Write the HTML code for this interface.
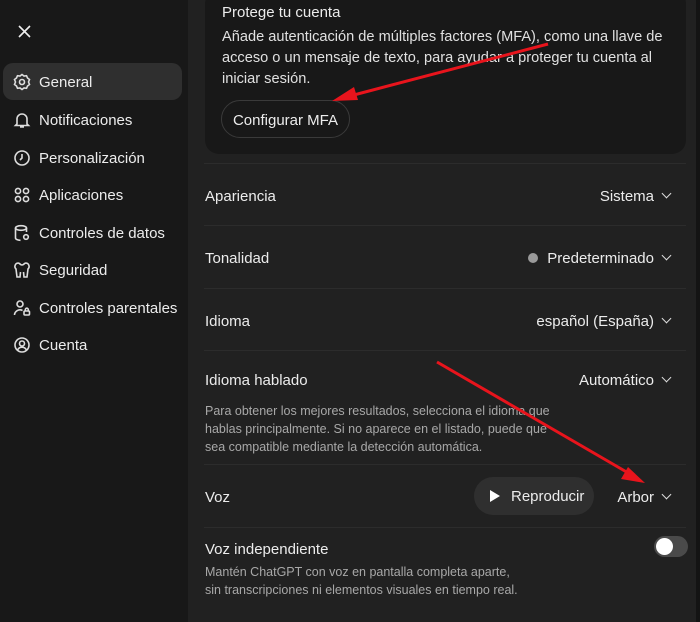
<!DOCTYPE html>
<html><head><meta charset="utf-8"><style>
*{margin:0;padding:0;box-sizing:border-box}
body{width:700px;height:622px;background:#212121;font-family:"Liberation Sans",sans-serif;color:#ececec;position:relative;overflow:hidden}
.sb{position:absolute;left:0;top:0;width:188px;height:622px;background:#181818}
.it{position:absolute;left:3px;width:179px;height:37px;border-radius:10px;font-size:15px;line-height:39px;padding-left:36px}
.it svg{position:absolute;left:10px;top:10px}
.sel{background:#2f2f2f}
.card{position:absolute;left:205px;top:-10px;width:481px;height:164px;background:#181818;border-radius:14px}
.t{position:absolute;font-size:15px;white-space:nowrap}
.d{position:absolute;font-size:12.5px;color:#a8a8a8;line-height:18px}
.hr{position:absolute;left:204px;width:482px;height:1px;background:#2c2c2c}
.ch{display:inline-block;width:7px;height:7px;border-right:1.6px solid #ddd;border-bottom:1.6px solid #ddd;transform:rotate(45deg);margin-left:9px;position:relative;top:-4px}
.edge{position:absolute;right:0;top:0;width:4px;height:622px;background:#141414}
</style></head><body>
<div class="sb">
<svg style="position:absolute;left:18px;top:25px" width="13" height="13"><path d="M1 1l11 11M12 1L1 12" stroke="#eee" stroke-width="1.6"/></svg>
<div class="it sel" style="top:63px"><svg width="18" height="18" viewBox="0 0 18 18" fill="none" stroke="#ddd" stroke-width="1.6"><circle cx="9" cy="9" r="2.5"/><path d="M9 1.5l2 1.5 2.5-.3 1 2.3 2 1.5-1 2.5 1 2.5-2 1.5-1 2.3-2.5-.3-2 1.5-2-1.5-2.5.3-1-2.3-2-1.5 1-2.5-1-2.5 2-1.5 1-2.3 2.5.3z"/></svg>General</div>
<div class="it" style="top:101px"><svg width="18" height="18" viewBox="0 0 18 18" fill="none" stroke="#ddd" stroke-width="1.6"><path d="M4 13V8a5 5 0 0110 0v5l1.5 1.5h-13zM7 16h4"/></svg>Notificaciones</div>
<div class="it" style="top:139px"><svg width="18" height="18" viewBox="0 0 18 18" fill="none" stroke="#ddd" stroke-width="1.6"><circle cx="9" cy="9" r="7"/><path d="M9 5v4l-2 2"/></svg>Personalización</div>
<div class="it" style="top:176px"><svg width="18" height="18" viewBox="0 0 18 18" fill="none" stroke="#ddd" stroke-width="1.6"><circle cx="5" cy="5" r="2.6"/><circle cx="13" cy="5" r="2.6"/><circle cx="5" cy="13" r="2.6"/><circle cx="13" cy="13" r="2.6"/></svg>Aplicaciones</div>
<div class="it" style="top:214px"><svg width="18" height="18" viewBox="0 0 18 18" fill="none" stroke="#ddd" stroke-width="1.6"><ellipse cx="8" cy="4" rx="5.5" ry="2.3"/><path d="M2.5 4v10c0 1.3 2.5 2.3 5 2.3M13.5 4v4"/><circle cx="13" cy="13" r="2.3"/></svg>Controles de datos</div>
<div class="it" style="top:251px"><svg width="18" height="18" viewBox="0 0 18 18" fill="none" stroke="#ddd" stroke-width="1.6"><path d="M5 2a3.5 3.5 0 00-2 6l1 8h3l.5-5M13 2a3.5 3.5 0 012 6l-1 8h-3l-.5-5M5 2c2 0 2 2 4 2s2-2 4-2"/></svg>Seguridad</div>
<div class="it" style="top:289px"><svg width="18" height="18" viewBox="0 0 18 18" fill="none" stroke="#ddd" stroke-width="1.6"><circle cx="7" cy="5" r="3"/><path d="M1.5 16a5.5 5.5 0 018-4.5"/><rect x="11" y="12" width="5.5" height="4" rx="1"/><path d="M12.3 12v-1.3a1.5 1.5 0 013 0V12"/></svg>Controles parentales</div>
<div class="it" style="top:326px"><svg width="18" height="18" viewBox="0 0 18 18" fill="none" stroke="#ddd" stroke-width="1.6"><circle cx="9" cy="9" r="7"/><circle cx="9" cy="7.5" r="2.5"/><path d="M4.5 14a5 5 0 019 0"/></svg>Cuenta</div>
</div>
<div class="card"></div>
<div class="t" style="left:222px;top:4px">Protege tu cuenta</div>
<div class="t" style="left:222px;top:27px;line-height:21px;white-space:normal;width:450px;font-size:14.6px;color:#e0e0e0">Añade autenticación de múltiples factores (MFA), como una llave de acceso o un mensaje de texto, para ayudar a proteger tu cuenta al iniciar sesión.</div>
<div style="position:absolute;left:221px;top:100px;width:129px;height:38px;border:1px solid #3a3a3a;border-radius:19px;font-size:15px;line-height:39px;text-align:center">Configurar MFA</div>
<div class="hr" style="top:163px"></div>
<div class="t" style="left:205px;top:188px">Apariencia</div>
<div class="t" style="right:30px;top:188px">Sistema<span class="ch"></span></div>
<div class="hr" style="top:225px"></div>
<div class="t" style="left:205px;top:250px">Tonalidad</div>
<div class="t" style="right:30px;top:250px"><span style="display:inline-block;width:10px;height:10px;border-radius:50%;background:#9a9a9a;margin-right:9px"></span>Predeterminado<span class="ch"></span></div>
<div class="hr" style="top:288px"></div>
<div class="t" style="left:205px;top:313px">Idioma</div>
<div class="t" style="right:30px;top:313px">español (España)<span class="ch"></span></div>
<div class="hr" style="top:350px"></div>
<div class="t" style="left:205px;top:372px">Idioma hablado</div>
<div class="t" style="right:30px;top:372px">Automático<span class="ch"></span></div>
<div class="d" style="left:205px;top:402px;width:352px">Para obtener los mejores resultados, selecciona el idioma que hablas principalmente. Si no aparece en el listado, puede que sea compatible mediante la detección automática.</div>
<div class="hr" style="top:464px"></div>
<div class="t" style="left:205px;top:489px">Voz</div>
<div style="position:absolute;left:474px;top:477px;width:120px;height:38px;border-radius:19px;background:#2f2f2f;font-size:15px;line-height:40px;padding-left:37px">Reproducir</div>
<svg style="position:absolute;left:489px;top:489px" width="12" height="14"><path d="M1 1l10 6-10 6z" fill="#fff"/></svg>
<div class="t" style="right:30px;top:489px">Arbor<span class="ch"></span></div>
<div class="hr" style="top:527px"></div>
<div class="t" style="left:205px;top:541px">Voz independiente</div>
<div style="position:absolute;left:654px;top:536px;width:34px;height:21px;border-radius:11px;background:#4a4a4a"><div style="position:absolute;left:2px;top:2px;width:17px;height:17px;border-radius:50%;background:#fff"></div></div>
<div class="d" style="left:205px;top:563px">Mantén ChatGPT con voz en pantalla completa aparte,<br>sin transcripciones ni elementos visuales en tiempo real.</div>
<div class="edge"></div>
<svg style="position:absolute;left:0;top:0" width="700" height="622">
<line x1="548" y1="44" x2="350" y2="96" stroke="#e8141c" stroke-width="3"/>
<path d="M332 101l22-14 4 13z" fill="#e8141c"/>
<line x1="437" y1="362" x2="630" y2="474" stroke="#e8141c" stroke-width="3"/>
<path d="M645 483l-24-4 7-12z" fill="#e8141c"/>
</svg>
</body></html>
